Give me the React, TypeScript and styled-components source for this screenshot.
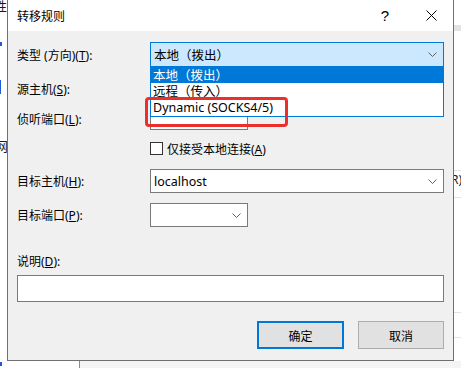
import React from 'react';
import styled, { createGlobalStyle } from 'styled-components';

const GlobalStyle = createGlobalStyle`
  html, body {
    margin: 0;
    padding: 0;
    background: #ffffff;
    overflow: hidden;
  }
  body {
    font-family: "Segoe UI", "Noto Sans", "Noto Sans CJK SC", sans-serif;
    font-size: 12px;
    color: #000000;
  }
`;

function Chevron() {
  return (
    <svg width="9" height="5" viewBox="0 0 9 5">
      <path d="M0.5 0.5 L4.5 4.5 L8.5 0.5" fill="none" stroke="#606060" strokeWidth="1" />
    </svg>
  );
}

function CloseIcon() {
  return (
    <svg width="11" height="11" viewBox="0 0 11 11">
      <path d="M0.5 0.5 L10.5 10.5 M10.5 0.5 L0.5 10.5" fill="none" stroke="#000" strokeWidth="1" />
    </svg>
  );
}

export default function App() {
  return (
    <>
      <GlobalStyle />
      <Desktop>
        <BackWindow>
          <EdgeGlyph $top={-4} $left={-6}>性</EdgeGlyph>
          <EdgeDot $top={42} />
          <EdgeBar $top={80} />
          <EdgeGlyph $top={136} $left={-5}>网</EdgeGlyph>
          <EdgeDot $top={362} />
          <RightBand $top={25} $h={6} />
          <RightBand $top={170} $h={1} />
          <RightText>R)</RightText>
          <RightBand $top={197} $h={1} />
          <RightBand $top={312} $h={1} />
          <RightBand $top={337} $h={1} />
          <BottomPane />
        </BackWindow>

        <Dialog>
          <TitleBar>
            <Title>转移规则</Title>
            <TitleButtons>
              <HelpMark>?</HelpMark>
              <CloseIcon />
            </TitleButtons>
          </TitleBar>

          <Body>
            <Row $mt={11} $h={25}>
              <Label>
                类型 (方向)(<u>T</u>):
              </Label>
              <ComboWrap $w={294}>
                <Combo $focused>
                  <ComboText>本地（拨出）</ComboText>
                  <Chevron />
                </Combo>
                <DropList>
                  <DropItem $selected>本地（拨出）</DropItem>
                  <DropItem>远程（传入）</DropItem>
                  <DropItem>Dynamic (SOCKS4/5)</DropItem>
                  <Highlight />
                </DropList>
              </ComboWrap>
            </Row>

            <Row $mt={10} $h={24}>
              <Label>
                源主机(<u>S</u>):
              </Label>
              <TextBox $w={294} />
            </Row>

            <Row $mt={6} $h={23}>
              <Label>
                侦听端口(<u>L</u>):
              </Label>
              <TextBox $w={98} />
            </Row>

            <Row $mt={12} $h={13}>
              <Label />
              <CheckLabel>
                <CheckBox />
                <span>
                  仅接受本地连接(<u>A</u>)
                </span>
              </CheckLabel>
            </Row>

            <Row $mt={14} $h={24}>
              <Label>
                目标主机(<u>H</u>):
              </Label>
              <ComboWrap $w={294}>
                <Combo>
                  <ComboText>localhost</ComboText>
                  <Chevron />
                </Combo>
              </ComboWrap>
            </Row>

            <Row $mt={10} $h={24}>
              <Label>
                目标端口(<u>P</u>):
              </Label>
              <ComboWrap $w={98}>
                <Combo>
                  <ComboText />
                  <Chevron />
                </Combo>
              </ComboWrap>
            </Row>

            <DescLabel>
              说明(<u>D</u>):
            </DescLabel>
            <DescBox />

            <ButtonRow>
              <Button $primary>确定</Button>
              <Button>取消</Button>
            </ButtonRow>
          </Body>
        </Dialog>
      </Desktop>
    </>
  );
}

const Desktop = styled.div`
  position: relative;
  width: 461px;
  height: 368px;
  overflow: hidden;
  padding-left: 7px;
  box-sizing: border-box;
`;

const BackWindow = styled.div`
  position: absolute;
  inset: 0;
`;

const EdgeGlyph = styled.span<{ $top: number; $left: number }>`
  position: absolute;
  top: ${(p) => p.$top}px;
  left: ${(p) => p.$left}px;
  font-family: "Noto Sans CJK SC", sans-serif;
  font-size: 13px;
  color: #1a1a1a;
`;

const EdgeDot = styled.div<{ $top: number }>`
  position: absolute;
  top: ${(p) => p.$top}px;
  left: 0;
  width: 2px;
  height: 4px;
  background: #1e5bd8;
`;

const EdgeBar = styled.div<{ $top: number }>`
  position: absolute;
  top: ${(p) => p.$top}px;
  left: 0;
  width: 1px;
  height: 14px;
  background: #1e5bd8;
`;

const RightBand = styled.div<{ $top: number; $h: number }>`
  position: absolute;
  top: ${(p) => p.$top}px;
  left: 454px;
  width: 7px;
  height: ${(p) => p.$h}px;
  background: #e3e3e3;
`;

const RightText = styled.span`
  position: absolute;
  top: 171px;
  left: 451px;
  font-size: 12px;
  color: #1a1a1a;
`;

const BottomPane = styled.div`
  position: absolute;
  top: 361px;
  left: 79px;
  right: 0;
  bottom: 0;
  border-left: 1px solid #8a8a8a;
  background: #f4f4f4;
`;

const Dialog = styled.div`
  position: relative;
  width: 447px;
  height: 361px;
  box-sizing: border-box;
  border: 1px solid #707070;
  border-top: none;
  background: #f0f0f0;
  display: flex;
  flex-direction: column;
`;

const TitleBar = styled.div`
  height: 31px;
  flex-shrink: 0;
  background: #ffffff;
  display: flex;
  align-items: center;
  justify-content: space-between;
  padding: 0 16px 0 9px;
`;

const Title = styled.span`
  font-family: "Noto Sans CJK SC", sans-serif;
  font-size: 12px;
`;

const TitleButtons = styled.div`
  display: flex;
  align-items: center;
  gap: 37px;
`;

const HelpMark = styled.span`
  font-family: "Segoe UI", "Liberation Sans", sans-serif;
  font-size: 15px;
  line-height: 1;
`;

const Body = styled.div`
  flex: 1;
  display: flex;
  flex-direction: column;
  padding: 0 9px 0 9px;
`;

const Row = styled.div<{ $mt: number; $h: number }>`
  margin-top: ${(p) => p.$mt}px;
  height: ${(p) => p.$h}px;
  display: flex;
  align-items: center;
`;

const Label = styled.span`
  width: 133px;
  flex-shrink: 0;
  white-space: nowrap;
`;

const ComboWrap = styled.div<{ $w: number }>`
  position: relative;
  width: ${(p) => p.$w}px;
  height: 100%;
`;

const Combo = styled.div<{ $focused?: boolean }>`
  height: 100%;
  box-sizing: border-box;
  border: 1px solid ${(p) => (p.$focused ? '#0078d7' : '#7a7a7a')};
  background: ${(p) => (p.$focused ? '#cce8ff' : '#ffffff')};
  display: flex;
  align-items: center;
  padding: 0 6px 0 3px;
`;

const ComboText = styled.span`
  flex: 1;
  font-size: 12.5px;
`;

const DropList = styled.div`
  position: absolute;
  top: 100%;
  left: 0;
  right: 0;
  z-index: 2;
  background: #ffffff;
  border: 1px solid #0078d7;
  border-top: none;
  padding-bottom: 1px;
`;

const DropItem = styled.div<{ $selected?: boolean }>`
  height: 15px;
  line-height: 15px;
  padding: 1px 0 0 2px;
  font-size: 12.5px;
  background: ${(p) => (p.$selected ? '#0078d7' : 'transparent')};
  color: ${(p) => (p.$selected ? '#ffffff' : '#000000')};
`;

const Highlight = styled.div`
  position: absolute;
  top: 30px;
  left: -6px;
  width: 143px;
  height: 30px;
  box-sizing: border-box;
  border: 3px solid #ec2f2b;
  border-radius: 4px;
  pointer-events: none;
`;

const TextBox = styled.div<{ $w: number }>`
  width: ${(p) => p.$w}px;
  height: 100%;
  box-sizing: border-box;
  border: 1px solid #7a7a7a;
  background: #ffffff;
`;

const CheckLabel = styled.label`
  display: flex;
  align-items: center;
  gap: 4px;
  white-space: nowrap;
`;

const CheckBox = styled.span`
  width: 13px;
  height: 13px;
  box-sizing: border-box;
  border: 1px solid #333333;
  background: #ffffff;
`;

const DescLabel = styled.span`
  margin-top: 27px;
  height: 16px;
  line-height: 16px;
`;

const DescBox = styled.div`
  margin-top: 5px;
  height: 27px;
  box-sizing: border-box;
  border: 1px solid #7a7a7a;
  background: #ffffff;
`;

const ButtonRow = styled.div`
  margin-top: 19px;
  display: flex;
  justify-content: flex-end;
  gap: 14px;
`;

const Button = styled.button<{ $primary?: boolean }>`
  width: ${(p) => (p.$primary ? 87 : 86)}px;
  height: 28px;
  box-sizing: border-box;
  margin: 0;
  padding: 0;
  font-family: "Noto Sans CJK SC", sans-serif;
  font-size: 12px;
  color: #000000;
  background: #e1e1e1;
  border: ${(p) => (p.$primary ? '2px solid #0078d7' : '1px solid #adadad')};
`;
